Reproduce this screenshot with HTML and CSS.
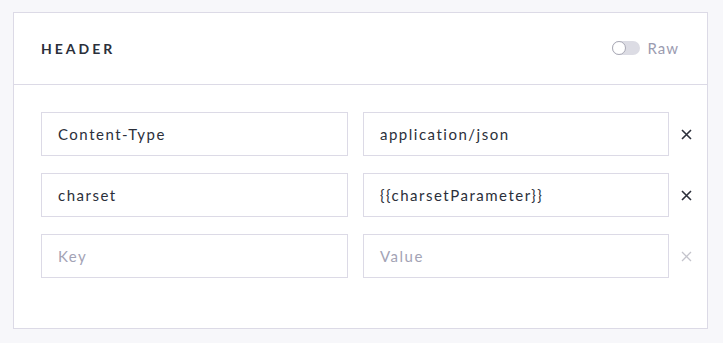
FILE: index.html
```html
<!DOCTYPE html>
<html>
<head>
<meta charset="utf-8">
<link rel="stylesheet" href="styles.css">
</head>
<body>
<div class="card">
  <div class="card-header">
    <div class="title">HEADER</div>
    <div class="raw">
      <span class="toggle"><span class="knob"></span></span>
      <span class="raw-label">Raw</span>
    </div>
  </div>
  <div class="card-body">
    <div class="row">
      <div class="field">Content-Type</div>
      <div class="field">application/json</div>
      <span class="remove">
        <svg width="11" height="11" viewBox="0 0 11 11"><path d="M1 1L10 10M10 1L1 10" stroke="#2b2f3a" stroke-width="1.6"/></svg>
      </span>
    </div>
    <div class="row">
      <div class="field">charset</div>
      <div class="field">{{charsetParameter}}</div>
      <span class="remove">
        <svg width="11" height="11" viewBox="0 0 11 11"><path d="M1 1L10 10M10 1L1 10" stroke="#2b2f3a" stroke-width="1.6"/></svg>
      </span>
    </div>
    <div class="row">
      <div class="field placeholder">Key</div>
      <div class="field placeholder">Value</div>
      <span class="remove">
        <svg width="11" height="11" viewBox="0 0 11 11"><path d="M1 1L10 10M10 1L1 10" stroke="#c4c4cc" stroke-width="1.3"/></svg>
      </span>
    </div>
  </div>
</div>
</body>
</html>
```
FILE: styles.css
```css
html, body {
  margin: 0;
  padding: 0;
  background: #f7f7fa;
  font-family: Lato, "Open Sans", sans-serif;
}
body {
  padding: 12px 15px 0 13px;
}
.card {
  box-sizing: border-box;
  width: 695px;
  height: 317px;
  background: #fff;
  border: 1px solid #dcdae6;
}
.card-header {
  height: 71px;
  border-bottom: 1px solid #dcdae6;
  display: flex;
  align-items: center;
  justify-content: space-between;
  padding: 0 28px 0 27px;
}
.title {
  font-size: 14px;
  font-weight: 700;
  letter-spacing: 3px;
  color: #2b2f3a;
  margin-top: -1px;
}
.raw {
  display: flex;
  align-items: center;
  gap: 8px;
  margin-top: -1px;
}
.toggle {
  width: 28px;
  height: 14px;
  border-radius: 7px;
  background: #dcdce4;
  position: relative;
  display: block;
}
.knob {
  position: absolute;
  left: 0;
  top: 0;
  box-sizing: border-box;
  width: 14px;
  height: 14px;
  border-radius: 50%;
  background: #fff;
  border: 1px solid #a8a8b4;
}
.raw-label {
  font-size: 15px;
  color: #9b9bb0;
  letter-spacing: 1px;
}
.card-body {
  padding: 27px 0 0 27px;
  display: flex;
  flex-direction: column;
  gap: 17px;
}
.row {
  display: flex;
  align-items: center;
  gap: 15px;
}
.field {
  box-sizing: border-box;
  height: 44px;
  border: 1px solid #dcdae6;
  padding: 0 16px;
  display: flex;
  align-items: center;
  font-size: 15px;
  letter-spacing: 1.5px;
  color: #2b2f3a;
}
.field:first-child { width: 307px; }
.field:nth-child(2) { width: 306px; }
.placeholder { color: #a3a3b5; }
.remove {
  display: flex;
  width: 11px;
  height: 11px;
  margin-left: -3px;
}
```
